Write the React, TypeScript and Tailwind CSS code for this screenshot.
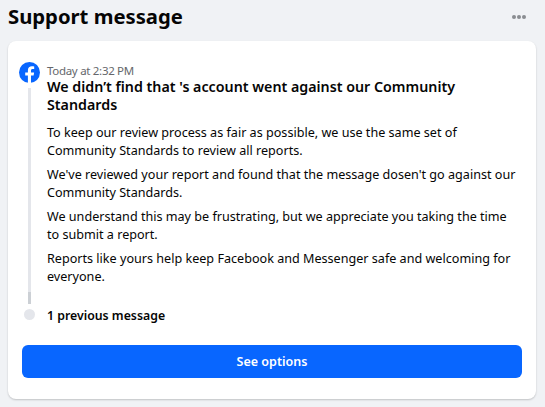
export default function App() {
  return (
    <div className="w-[545px] h-[407px] overflow-hidden bg-[#f0f2f5] pl-2 pr-[9px] font-['Noto_Sans',sans-serif] text-[#050505]">
      <div className="flex h-[41px] items-start justify-between">
        <h1 className="text-[20.25px] leading-[33px] font-bold">Support message</h1>
        <svg width="16" height="6" viewBox="0 0 16 6" className="mt-[14px] mr-[9px]">
          <circle cx="3" cy="3" r="2" fill="#8a8d91" />
          <circle cx="8" cy="3" r="2" fill="#8a8d91" />
          <circle cx="13" cy="3" r="2" fill="#8a8d91" />
        </svg>
      </div>
      <div className="h-[358px] rounded-lg bg-white px-[14px] pt-[21px] shadow-[0_1px_2px_rgba(0,0,0,0.2)]">
        <div className="flex">
          <div className="-ml-[3px] flex w-[21px] shrink-0 flex-col items-center">
            <svg width="21" height="21" viewBox="0 0 21 21" className="shrink-0">
              <circle cx="10.5" cy="10.5" r="10.5" fill="#0866ff" />
              <path d="M14.600 13.500l.5-3H12V8.600c0-.9.4-1.600 1.700-1.600h1.500V4.400c-.5-.1-1.400-.2-2.300-.2-2.400 0-4 1.400-4 4.100v2.200H6.200v3h2.700V21h3.100v-7.500z" fill="#fff" />
            </svg>
            <div className="mt-[5px] h-[204px] w-[3px] bg-[#e4e6eb]" />
            <div className="h-[12px] w-[3px] bg-[#ccd0d5]" />
            <div className="mt-[5px] h-[11px] w-[11px] rounded-full bg-[#e4e6eb]" />
          </div>
          <div className="ml-[7px] flex-1 pt-[2px]">
            <div className="text-[11.5px] leading-[14px] tracking-[-0.3px] text-[#65676b]">Today at 2:32 PM</div>
            <h2 className="text-[14.25px] leading-[18px] font-semibold pr-4">We didn’t find that 's account went against our Community Standards</h2>
            <div className="mt-[10px] flex flex-col gap-[6px] text-[12.6px] leading-[18px]">
              <p>To keep our review process as fair as possible, we use the same set of Community Standards to review all reports.</p>
              <p>We've reviewed your report and found that the message dosen't go against our Community Standards.</p>
              <p>We understand this may be frustrating, but we appreciate you taking the time to submit a report.</p>
              <p>Reports like yours help keep Facebook and Messenger safe and welcoming for everyone.</p>
            </div>
            <div className="mt-[21px] text-[12.3px] leading-[18px] font-semibold">1 previous message</div>
          </div>
        </div>
        <button className="mt-[20px] h-[33px] w-full rounded-md bg-[#0866ff] pt-[2px] text-[12.5px] font-semibold text-white">See options</button>
      </div>
    </div>
  );
}
